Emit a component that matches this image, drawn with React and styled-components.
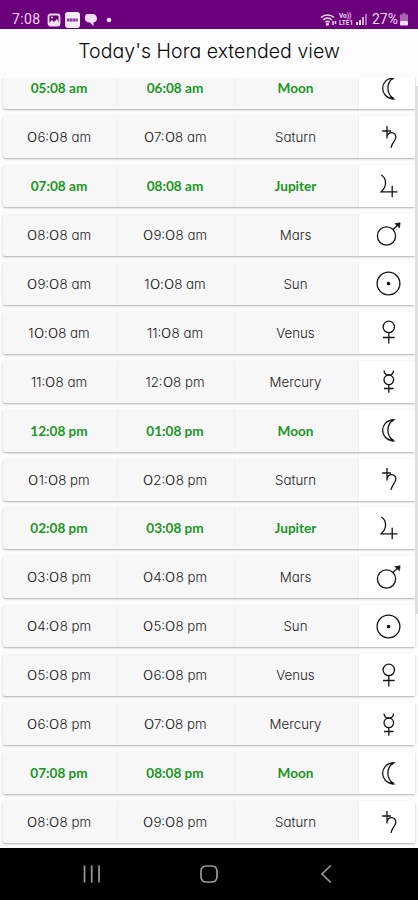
import React from "react";
import styled, { createGlobalStyle } from "styled-components";

const GlobalStyle = createGlobalStyle`
  * {
    box-sizing: border-box;
  }
  body {
    margin: 0;
    background: #fcfcfc;
    font-family: Inter, "Noto Sans", sans-serif;
    font-feature-settings: "cv11";
  }
`;

const Screen = styled.div`
  width: 418px;
  height: 900px;
  display: flex;
  flex-direction: column;
  overflow: hidden;
`;

const StatusBar = styled.div`
  height: 29px;
  flex: none;
  display: flex;
  justify-content: space-between;
  padding: 10px 10px 0 12px;
  background: #6b007b;
  color: #f0d8f3;
  font-family: Roboto, sans-serif;
  font-size: 14px;
  line-height: 19px;
`;

const StatusGroup = styled.div`
  display: flex;
  align-items: center;
  height: 19px;
  gap: ${props => props.$gap}px;
  svg {
    display: block;
    flex: none;
  }
`;

const Clock = styled.span`
  width: 31px;
  letter-spacing: 0.4px;
`;

const NetworkLabel = styled.div`
  display: flex;
  flex-direction: column;
  width: 14px;
  font-size: 6.5px;
  line-height: 7px;
  font-weight: 700;
  white-space: nowrap;
`;

const Battery = styled.span`
  margin-left: 2px;
  font-size: 14px;
`;

const Title = styled.h1`
  height: 49px;
  flex: none;
  margin: 0;
  padding-top: 8px;
  text-align: center;
  font-size: 19.5px;
  line-height: 28px;
  font-weight: 300;
  letter-spacing: 0.05px;
  color: #080808;
`;

const List = styled.div`
  position: relative;
  flex: 1;
  display: flex;
  flex-direction: column;
  justify-content: flex-end;
  gap: 6.93px;
  padding: 0 3px 5px;
  overflow: hidden;
`;

const Scrollbar = styled.div`
  position: absolute;
  right: 0;
  top: 8px;
  width: 3px;
  height: 528px;
  background: #dedede;
`;

const Row = styled.div`
  flex: none;
  height: 42px;
  display: grid;
  grid-template-columns: 115px 117px 124px 56px;
  background: #f7f7f7;
  border-radius: 2px;
  box-shadow: 0 1px 2px rgba(0, 0, 0, 0.3);
`;

const Cell = styled.div`
  display: flex;
  align-items: center;
  justify-content: center;
  padding-right: 2px;
  border-right: 1px solid #f0f0f0;
  color: ${props => (props.$good ? "#1a9625" : "#222")};
  font-family: ${props =>
    props.$good ? "Lato, sans-serif" : 'Inter, "Noto Sans", sans-serif'};
  font-size: ${props => (props.$good ? 13.6 : 13.3)}px;
  font-weight: ${props => (props.$good ? 700 : 300)};
  white-space: pre;
`;

const Zero = styled.span`
  display: inline-block;
  transform: scaleX(1.3);
  margin: 0 1.1px;
`;

const IconCell = styled.div`
  display: flex;
  align-items: center;
  justify-content: center;
  padding-left: 3px;
  background: #fff;
  svg {
    fill: none;
    stroke: #151515;
    stroke-width: 1.3;
  }
`;

const NavBar = styled.div`
  height: 52px;
  flex: none;
  display: grid;
  grid-template-columns: 1fr 1fr 1fr;
  align-items: center;
  justify-items: center;
  padding: 0 34px 0 33px;
  background: #000;
  svg {
    fill: none;
    stroke: #999;
    stroke-width: 1.7;
  }
`;

const glyphs = {
  Moon: (
    <>
      <path d="M18.5 3C4 3.5 4 23 18.5 23.8C11 18.5 11 7.5 18.5 3Z" />
      <path d="M16.3 3.7L18.5 3M15.5 22.3L18.5 23.8" strokeWidth="2.2" />
    </>
  ),
  Saturn: (
    <path d="M7.2 7H16M12 2V14.5M12 12C14 7 20 8 20.8 12.5C21.3 16.5 17 18.5 16 23.8" />
  ),
  Jupiter: (
    <path d="M6.2 2C11.5 5 12.5 13 6.2 18.8H22.5M17.2 12.8V24.2" />
  ),
  Mars: (
    <>
      <circle cx="11.5" cy="15" r="9.1" />
      <path d="M18 8.5L24.5 2.3" />
      <path d="M19.8 2.6L25.2 1.8L24.4 7L22.3 4.6Z" fill="#151515" strokeWidth="0.6" />
    </>
  ),
  Sun: (
    <>
      <circle cx="13.5" cy="13.5" r="11.4" />
      <circle cx="13.5" cy="13.5" r="1.2" fill="#151515" />
    </>
  ),
  Venus: (
    <>
      <circle cx="13.8" cy="7.9" r="5.7" />
      <path d="M13.8 13.6V24.6M8 18.5H19.6" />
    </>
  ),
  Mercury: (
    <>
      <circle cx="13.8" cy="11.8" r="4.8" />
      <path d="M9 2.5C9.5 8.6 18.1 8.6 18.6 2.5M13.8 16.6V24.8M9 20.5H18.6" />
    </>
  )
};

const PlanetIcon = ({ name }) => (
  <svg width="27" height="27" viewBox="0 0 27 27">
    {glyphs[name]}
  </svg>
);

const horas = [
  ["05:08 am", "06:08 am", "Moon"],
  ["06:08 am", "07:08 am", "Saturn"],
  ["07:08 am", "08:08 am", "Jupiter"],
  ["08:08 am", "09:08 am", "Mars"],
  ["09:08 am", "10:08 am", "Sun"],
  ["10:08 am", "11:08 am", "Venus"],
  ["11:08 am", "12:08 pm", "Mercury"],
  ["12:08 pm", "01:08 pm", "Moon"],
  ["01:08 pm", "02:08 pm", "Saturn"],
  ["02:08 pm", "03:08 pm", "Jupiter"],
  ["03:08 pm", "04:08 pm", "Mars"],
  ["04:08 pm", "05:08 pm", "Sun"],
  ["05:08 pm", "06:08 pm", "Venus"],
  ["06:08 pm", "07:08 pm", "Mercury"],
  ["07:08 pm", "08:08 pm", "Moon"],
  ["08:08 pm", "09:08 pm", "Saturn"]
];

const isGood = planet => planet === "Moon" || planet === "Jupiter";

const Time = ({ value, good }) => (
  <Cell $good={good}>
    <span>
      {good
        ? value
        : value
            .split(/(0)/)
            .map((part, i) => (part === "0" ? <Zero key={i}>0</Zero> : part))}
    </span>
  </Cell>
);

const StatusIcons = () => (
  <StatusGroup $gap={4}>
    <Clock>7:08</Clock>
    <svg width="14" height="14" viewBox="0 0 14 14">
      <rect x="1.5" y="1.5" width="11" height="11" rx="2" fill="none" stroke="#f3dff5" strokeWidth="1.8" />
      <path d="M2 10L5 7L7 9L10 6L12 10V12H2Z" fill="#f3dff5" />
      <circle cx="5" cy="4.6" r="1" fill="#f3dff5" />
    </svg>
    <svg width="15" height="16" viewBox="0 0 15 16">
      <rect width="15" height="16" rx="3" fill="#f7eaf8" />
      <path d="M2 7.3H13M2 8.8H13" stroke="#8a3b96" strokeWidth="1.4" strokeDasharray="2.4 0.4" />
    </svg>
    <svg width="14" height="14" viewBox="0 0 14 14">
      <path d="M3.5 1H8.5C11 1 13 3 13 5.5C13 8 11.5 9 9.5 9.3V13L6 9.5C2.5 9.5 0.8 7.8 0.8 5C0.8 2.5 2 1 3.5 1Z" fill="#f3dff5" />
    </svg>
    <svg width="12" height="6" viewBox="0 0 12 6">
      <circle cx="7" cy="3" r="2.3" fill="#f3dff5" />
    </svg>
  </StatusGroup>
);

const SignalIcons = () => (
  <StatusGroup $gap={2}>
    <svg width="17" height="14" viewBox="0 0 17 14" fill="none" stroke="#f3dff5" strokeWidth="1.5">
      <path d="M1 4.5C4.5 1 10.5 1 14 4.5M3.2 7C5.8 4.5 9.2 4.5 11.8 7M5.4 9.3C6.8 8 8.2 8 9.6 9.3" />
      <circle cx="7.5" cy="11.3" r="0.8" />
      <path d="M13 8V12M15.5 8V11" />
    </svg>
    <NetworkLabel>
      <span>Vo))</span>
      <span>LTE1</span>
    </NetworkLabel>
    <svg width="13" height="11" viewBox="0 0 13 11" fill="#f3dff5">
      <rect x="1" y="8" width="2" height="3" />
      <rect x="4" y="6" width="2" height="5" />
      <rect x="7" y="3" width="2" height="8" opacity="0.75" />
      <rect x="10" y="0" width="2" height="11" opacity="0.5" />
    </svg>
    <Battery>27%</Battery>
    <svg width="8" height="13" viewBox="0 0 8 13">
      <path d="M2.5 0H5.5V1.5H8V8H0V1.5H2.5Z" fill="#f3dff5" opacity="0.45" />
      <rect y="8" width="8" height="4.5" rx="1" fill="#f3dff5" />
    </svg>
  </StatusGroup>
);

const App = () => (
  <Screen>
    <GlobalStyle />
    <StatusBar>
      <StatusIcons />
      <SignalIcons />
    </StatusBar>
    <Title>Today's Hora extended view</Title>
    <List>
      {horas.map(([start, end, planet]) => (
        <Row key={start}>
          <Time value={start} good={isGood(planet)} />
          <Time value={end} good={isGood(planet)} />
          <Cell $good={isGood(planet)}>{planet}</Cell>
          <IconCell>
            <PlanetIcon name={planet} />
          </IconCell>
        </Row>
      ))}
      <Scrollbar />
    </List>
    <NavBar>
      <svg width="18" height="18" viewBox="0 0 18 18">
        <path d="M1.5 0.5V17.5M8.7 0.5V17.5M16 0.5V17.5" />
      </svg>
      <svg width="18" height="18" viewBox="0 0 18 18">
        <rect x="1" y="1" width="16" height="16" rx="5" />
      </svg>
      <svg width="12" height="20" viewBox="0 0 12 20">
        <path d="M10.8 1.5L2 10L10.8 18.5" />
      </svg>
    </NavBar>
  </Screen>
);

export default App;
